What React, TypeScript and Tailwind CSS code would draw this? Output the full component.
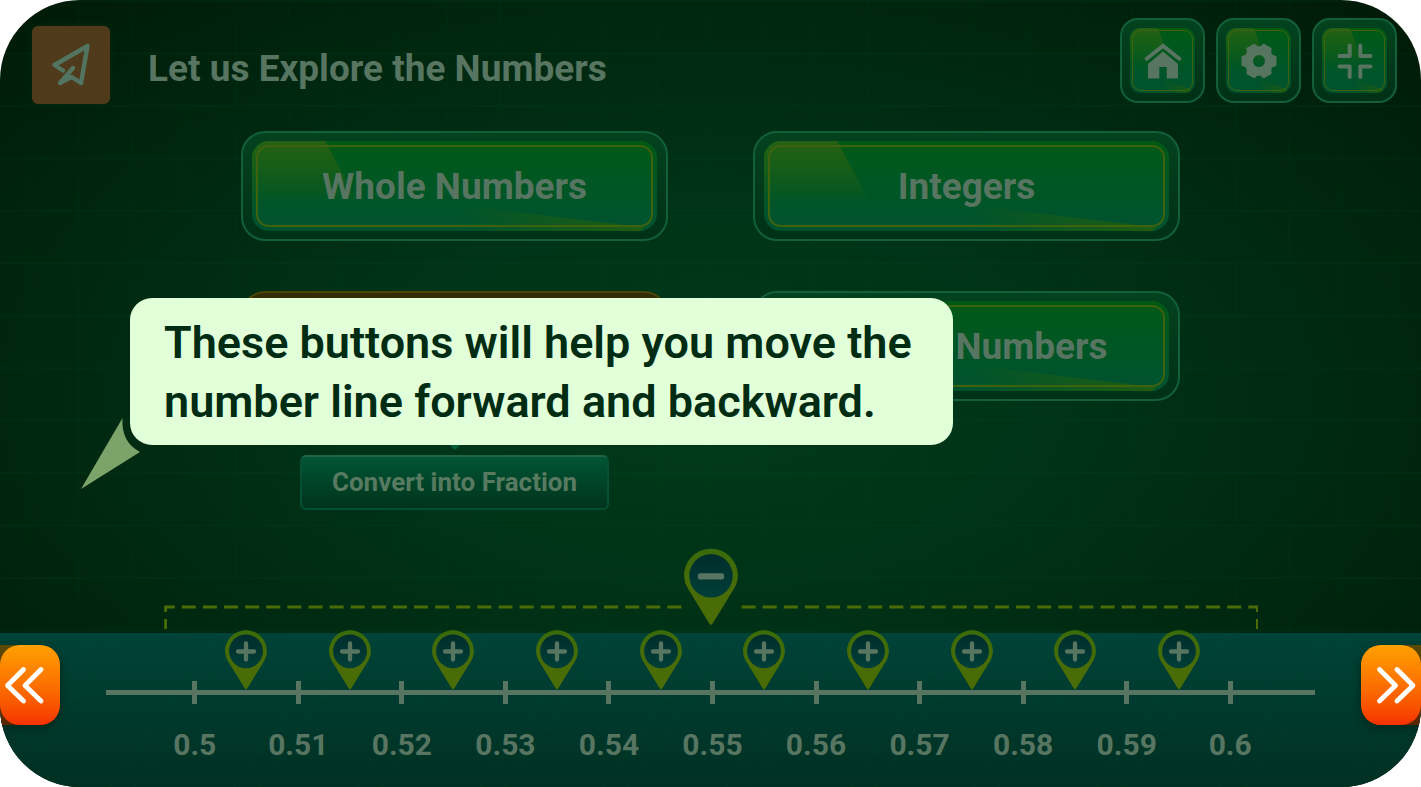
import type { ReactNode } from "react";

const TICKS = ["0.5", "0.51", "0.52", "0.53", "0.54", "0.55", "0.56", "0.57", "0.58", "0.59", "0.6"];

function GlossyFrame({ small = false, children }: { small?: boolean; children: ReactNode }) {
  return (
    <span
      className={
        small
          ? "relative grid h-full w-full place-items-center overflow-hidden rounded-[11px] bg-linear-to-b from-[#005a13] to-[#00522f]"
          : "relative grid h-full w-full place-items-center overflow-hidden rounded-[17px] bg-linear-to-b from-[#005a13] to-[#00522f]"
      }
    >
      <span
        className={
          small
            ? "absolute inset-0 bg-linear-to-b from-[#246114] to-[#24611400] to-60% [clip-path:polygon(0_0,28px_0,50px_64px,0_64px)]"
            : "absolute inset-0 bg-linear-to-b from-[#266114] to-[#26611400] to-70% [clip-path:polygon(0_0,73px_0,122px_90px,0_90px)]"
        }
      />
      <span
        className={
          small
            ? "absolute inset-0 bg-linear-to-r from-[#2c600000] from-50% to-[#2c600099] to-95% [clip-path:polygon(50%_78%,95%_95%,92%_100%,50%_100%)]"
            : "absolute inset-0 bg-linear-to-r from-[#24600c00] from-50% to-[#24600ccc] to-95% [clip-path:polygon(45%_68%,97%_96%,96%_100%,45%_100%)]"
        }
      />
      <span
        className={
          small
            ? "absolute inset-0.5 rounded-[9px] border border-[#41630f]"
            : "absolute inset-1 rounded-[13px] border-2 border-[#3f620f]"
        }
      />
      <span className={small ? "relative" : "relative pt-0.5"}>{children}</span>
    </span>
  );
}

function ToolButton({ label, children }: { label: string; children: ReactNode }) {
  return (
    <button
      aria-label={label}
      className="h-[85px] w-[85px] rounded-[18px] border-2 border-[#11603a] bg-linear-to-b from-[#04431f] to-[#003116] p-2"
    >
      <GlossyFrame small>{children}</GlossyFrame>
    </button>
  );
}

function ModeButton({ label, active = false, children }: { label: string; active?: boolean; children?: ReactNode }) {
  return (
    <button
      aria-label={label}
      className={
        active
          ? "h-[110px] rounded-3xl border-2 border-[#4c4408] bg-linear-to-b from-[#332c06] to-[#1f2404] px-[9px] py-2 text-[37px] font-bold text-[#577560]"
          : "h-[110px] rounded-3xl border-2 border-[#11603a] bg-linear-to-b from-[#04431f] to-[#003116] px-[9px] py-2 text-[37px] font-bold text-[#577560]"
      }
    >
      <GlossyFrame>{children}</GlossyFrame>
    </button>
  );
}

function PlaneLogo() {
  return (
    <svg viewBox="0 0 78 78" className="h-[78px] w-[78px]" aria-hidden="true">
      <path
        d="M31 44.5 22.5 39 55.5 20 49 57 39.5 51 28 57 41 42"
        fill="none"
        stroke="#527461"
        strokeWidth="4.4"
        strokeLinejoin="round"
        strokeLinecap="round"
      />
    </svg>
  );
}

function HomeIcon() {
  return (
    <svg viewBox="0 0 38 38" className="h-[38px] w-[38px]" aria-hidden="true">
      <path d="M1.5 18 19 4 36.5 18" fill="none" stroke="#577560" strokeWidth="4.2" />
      <path d="M19 9.5 4 22V36.5H15.3V25H22.7V36.5H34V22Z" fill="#577560" />
      <path d="M2 20.5 19 7.3 36 20.5" fill="none" stroke="#005520" strokeWidth="1.2" />
    </svg>
  );
}

function GearIcon() {
  const teeth = Array.from({ length: 6 }, (_, i) => {
    const at = (deg: number, r: number) => {
      const a = ((i * 60 + deg) * Math.PI) / 180;
      return `${19 + r * Math.cos(a)},${19 + r * Math.sin(a)}`;
    };
    return [at(-13, 16.8), at(13, 16.8), at(22, 13.8), at(38, 13.8)].join(" ");
  }).join(" ");
  return (
    <svg viewBox="0 0 38 38" className="h-[38px] w-[38px]" aria-hidden="true">
      <mask id="gear-hole">
        <rect width="38" height="38" fill="#fff" />
        <circle cx="19" cy="19" r="6" fill="#000" />
      </mask>
      <polygon points={teeth} fill="#577560" stroke="#577560" strokeWidth="2.4" strokeLinejoin="round" mask="url(#gear-hole)" />
    </svg>
  );
}

function CompressIcon() {
  return (
    <svg viewBox="0 0 38 38" className="h-[38px] w-[38px]" aria-hidden="true">
      <path
        d="M3.5 14H13.7V3.5M34.5 14H24.3V3.5M3.5 24.5H13.7V35M34.5 24.5H24.3V35"
        fill="none"
        stroke="#577560"
        strokeWidth="4"
        strokeLinecap="round"
        strokeLinejoin="round"
      />
    </svg>
  );
}

function PinShape({ kind }: { kind: "plus" | "minus" }) {
  return (
    <svg viewBox="0 0 42 60" className="block h-full w-full" aria-hidden="true">
      <defs>
        <linearGradient id={`rim-${kind}`} x1="0" y1="0" x2="0" y2="1">
          <stop offset="0" stopColor="#3b6b0a" />
          <stop offset="0.6" stopColor="#4a6c06" />
        </linearGradient>
        <linearGradient id={`core-${kind}`} x1="0" y1="0" x2="0" y2="1">
          <stop offset="0" stopColor="#002d2c" />
          <stop offset="1" stopColor="#003f38" />
        </linearGradient>
      </defs>
      <path
        d="M21 .2C9.5 .2 .1 9.5 .1 21C.1 25.5 1.6 29 4 32.8L19.8 58.5Q21 60.3 22.2 58.5L38 32.8C40.4 29 41.9 25.5 41.9 21C41.9 9.5 32.5 .2 21 .2Z"
        fill={`url(#rim-${kind})`}
      />
      <circle cx="21" cy="21.3" r="16.9" fill={`url(#core-${kind})`} />
      {kind === "plus" ? (
        <path d="M13 21.5H29M21 13.5V29.5" stroke="#577560" strokeWidth="4.3" strokeLinecap="round" />
      ) : (
        <rect x="10.8" y="19.4" width="20.4" height="4.8" rx="1.8" fill="#577560" />
      )}
    </svg>
  );
}

function BracketHalf({ side }: { side: "left" | "right" }) {
  return (
    <svg viewBox="0 0 520 24" className="mb-1 min-w-0 flex-1" aria-hidden="true">
      <path
        d={side === "left" ? "M2.5 24V2H518" : "M519 24V2H2"}
        fill="none"
        stroke="#4a6c06"
        strokeWidth="2.8"
        strokeDasharray="14 7.1"
        strokeDashoffset="4"
      />
    </svg>
  );
}

function MoveButton({ direction }: { direction: "back" | "forward" }) {
  const back = direction === "back";
  return (
    <div
      className={
        back
          ? "absolute bottom-[62px] left-0 rounded-r-[20px] bg-linear-to-b from-[#5a4a06] to-[#5a2503] shadow-[0_3px_8px_#00281c]"
          : "absolute right-0 bottom-[62px] rounded-l-[20px] bg-linear-to-b from-[#5a4a06] to-[#5a2503] shadow-[0_3px_8px_#00281c]"
      }
    >
      <button
        aria-label={back ? "Move number line backward" : "Move number line forward"}
        className="block h-20 w-[60px] rounded-[20px] bg-linear-to-b from-[#ffa000] to-[#f43000]"
      >
        <svg viewBox="0 0 60 80" className="h-20 w-[60px]" aria-hidden="true">
          <path
            d={back ? "M23.5 24.5 7.5 40.5 23.5 56M41 24.5 25 40.5 41 56" : "M18.5 24.5 34.5 40.5 18.5 56M36 24.5 52 40.5 36 56"}
            fill="none"
            stroke="#fff"
            strokeWidth="4.8"
            strokeLinecap="round"
            strokeLinejoin="round"
          />
        </svg>
      </button>
    </div>
  );
}

export default function App() {
  return (
    <main className="relative flex min-h-screen flex-col overflow-hidden rounded-[80px] bg-[radial-gradient(ellipse_at_center,#003b1a_0%,#003317_35%,#00260f_70%,#001a08_100%)] font-['Roboto',sans-serif] text-[#577560]">
      <div className="absolute inset-0 bg-[linear-gradient(to_right,#00603009_2px,transparent_2px),linear-gradient(to_bottom,#00603016_2px,transparent_2px)] bg-[size:calc(100%/27)_calc(100%/15)] bg-position-[25px_0px]" />

      <header className="relative flex items-start pt-[18px] pr-6 pl-8">
        <div className="mt-2 rounded-[6px] bg-[#4f3a1b] shadow-[0_0_8px_#02280e]">
          <PlaneLogo />
        </div>
        <h1 className="mt-7 ml-[38px] flex-1 text-[37px] leading-[45px] font-bold">Let us Explore the Numbers</h1>
        <div className="flex gap-[11px]">
          <ToolButton label="Home">
            <HomeIcon />
          </ToolButton>
          <ToolButton label="Settings">
            <GearIcon />
          </ToolButton>
          <ToolButton label="Exit full screen">
            <CompressIcon />
          </ToolButton>
        </div>
      </header>

      <nav className="relative mx-auto mt-[27px] grid w-full max-w-[939px] grid-cols-2 gap-x-[85px] gap-y-[50px] pb-2">
        <ModeButton label="Whole Numbers">Whole Numbers</ModeButton>
        <ModeButton label="Integers">Integers</ModeButton>
        <ModeButton label="Decimal Numbers" active />
        <ModeButton label="Natural Numbers">
          <span className="pl-[130px]">Numbers</span>
        </ModeButton>
        <div className="-mt-[11px] flex flex-col items-center">
          <svg viewBox="0 0 18 10" className="h-[10px] w-[18px]" aria-hidden="true">
            <path d="M0 0H18L11 8.5Q9 10.5 7 8.5Z" fill="#005a3a" />
          </svg>
          <button className="mt-[5px] h-[55px] w-[309px] rounded-md border-2 border-t-[#1d6448] border-r-[#075038] border-b-[#005032] border-l-[#075038] bg-linear-to-b from-[#005536] to-[#00341c] text-[26px] font-bold text-[#577a60]">
            Convert into Fraction
          </button>
        </div>
      </nav>

      <div className="relative mt-auto flex items-end px-[163px] pt-4">
        <BracketHalf side="left" />
        <button aria-label="Zoom out" className="mb-[7px] h-[78px] w-[54px]">
          <PinShape kind="minus" />
        </button>
        <BracketHalf side="right" />
      </div>

      <section
        aria-label="Number line"
        className="relative bg-[repeating-linear-gradient(125deg,transparent_0px,transparent_77px,#10703018_78px,transparent_79px,transparent_97px,#10703018_98px,transparent_99px,transparent_101px),linear-gradient(to_bottom,#004338,#003022)] pb-6"
      >
        <div className="relative z-10 -mt-[3px] grid grid-cols-10 justify-items-center pr-[190px] pl-[194px]">
          {TICKS.slice(1).map((t) => (
            <button key={t} aria-label={`Zoom in before ${t}`} className="h-[60px] w-[42px]">
              <PinShape kind="plus" />
            </button>
          ))}
        </div>
        <div className="-mt-[9px] grid items-center">
          <div className="mx-[106px] h-[5px] bg-[#577560] [grid-area:1/1]" />
          <div className="grid grid-cols-11 justify-items-center pr-[139px] pl-[143px] [grid-area:1/1]">
            {TICKS.map((t) => (
              <span key={t} className="h-[23px] w-[5px] bg-[#577560]" />
            ))}
          </div>
        </div>
        <div className="mt-[23px] grid grid-cols-11 justify-items-center pr-[139px] pl-[143px] text-3xl leading-9 font-bold">
          {TICKS.map((t) => (
            <span key={t}>{t}</span>
          ))}
        </div>
      </section>

      <MoveButton direction="back" />
      <MoveButton direction="forward" />

      <aside className="absolute top-[298px] left-[130px]">
        <svg viewBox="0 0 60 72" className="absolute top-[120px] -left-[49px] h-[72px] w-[60px]" aria-hidden="true">
          <path d="M41.5 0Q40 24 59 34L0 71Z" fill="#7ca369" />
        </svg>
        <p className="relative rounded-[22px] bg-[#e1ffd8] pt-[15px] pr-[41px] pb-[14px] pl-[34px] text-[45px] leading-[59px] font-semibold text-[#002c14]">
          These buttons will help you move the
          <br />
          number line forward and backward.
        </p>
      </aside>
    </main>
  );
}
